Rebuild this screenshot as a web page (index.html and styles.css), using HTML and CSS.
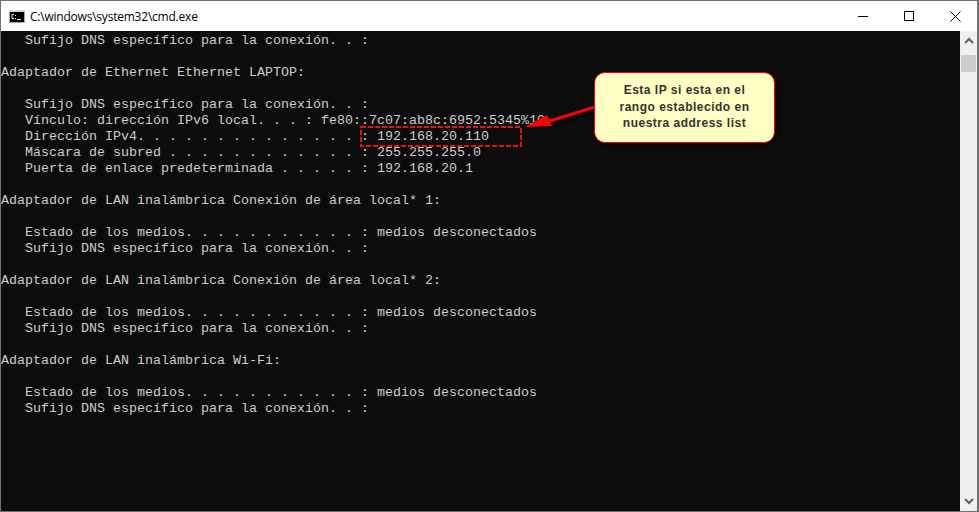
FILE: index.html
```html
<!DOCTYPE html>
<html lang="es">
<head>
<meta charset="utf-8">
<title>cmd.exe</title>
<link rel="stylesheet" href="styles.css">
</head>
<body>
<div class="window">
  <header class="titlebar">
    <svg class="app-icon" width="16" height="13" viewBox="0 0 16 13" aria-hidden="true">
      <rect x="0" y="0" width="16" height="13" fill="#a8a8a8"/>
      <rect x="0" y="0" width="16" height="2" fill="#d8d8d8"/>
      <rect x="1" y="2" width="14" height="10" fill="#000"/>
      <path d="M5 4.500H3v4h2M6.500 5v1M6.500 8v1M8 9.500h4" fill="none" stroke="#e8e8e8" stroke-width="1"/>
    </svg>
    <span class="title">C:\windows\system32\cmd.exe</span>
    <div class="controls">
      <span class="ctl"><svg width="10" height="10" viewBox="0 0 10 10"><path d="M0 5.500H10" stroke="#000" fill="none"/></svg></span>
      <span class="ctl"><svg width="10" height="10" viewBox="0 0 10 10"><rect x=".5" y=".5" width="9" height="9" stroke="#000" fill="none"/></svg></span>
      <span class="ctl"><svg width="11" height="11" viewBox="0 0 11 11"><path d="M.5 .5L10.500 10.500M10.500 .5L.5 10.500" stroke="#000" fill="none" stroke-width="1"/></svg></span>
    </div>
  </header>
  <div class="body">
<pre class="console">   Sufijo DNS específico para la conexión. . :

Adaptador de Ethernet Ethernet LAPTOP:

   Sufijo DNS específico para la conexión. . :
   Vínculo: dirección IPv6 local. . . : fe80::7c07:ab8c:6952:5345%10
   Dirección IPv4. . . . . . . . . . . . . . : 192.168.20.110
   Máscara de subred . . . . . . . . . . . . : 255.255.255.0
   Puerta de enlace predeterminada . . . . . : 192.168.20.1

Adaptador de LAN inalámbrica Conexión de área local* 1:

   Estado de los medios. . . . . . . . . . . : medios desconectados
   Sufijo DNS específico para la conexión. . :

Adaptador de LAN inalámbrica Conexión de área local* 2:

   Estado de los medios. . . . . . . . . . . : medios desconectados
   Sufijo DNS específico para la conexión. . :

Adaptador de LAN inalámbrica Wi-Fi:

   Estado de los medios. . . . . . . . . . . : medios desconectados
   Sufijo DNS específico para la conexión. . :</pre>
    <div class="scrollbar">
      <svg class="arrow" width="10" height="7" viewBox="0 0 10 7"><path d="M1 6L5 2L9 6" fill="none" stroke="#606060" stroke-width="2"/></svg>
      <div class="thumb"></div>
      <svg class="arrow arrow-down" width="10" height="7" viewBox="0 0 10 7"><path d="M1 1L5 5L9 1" fill="none" stroke="#606060" stroke-width="2"/></svg>
    </div>
  </div>
  <svg class="dashed-box" width="162" height="21" viewBox="0 0 162 21" aria-hidden="true">
    <rect x="1" y="1" width="160" height="19" fill="none" stroke="#e81010" stroke-width="2" stroke-dasharray="5 2"/>
  </svg>
  <svg class="pointer" width="80" height="40" viewBox="0 0 80 40" aria-hidden="true">
    <path d="M75 12L24 28" stroke="#000" stroke-opacity=".35" stroke-width="3" fill="none" transform="translate(1 2)"/>
    <path d="M75 9L20 26" stroke="#f00" stroke-width="3" fill="none"/>
    <path d="M5 29L27 17L32 28Z" fill="#f00"/>
  </svg>
  <div class="callout">Esta IP si esta en el<br>rango establecido en<br>nuestra address list</div>
</div>
</body>
</html>
```
FILE: styles.css
```css
* { box-sizing: border-box; }
html, body { margin: 0; padding: 0; }
body { width: 979px; height: 512px; overflow: hidden; background: #fff; }
.window {
  position: relative;
  width: 979px;
  height: 512px;
  border: 1px solid #707070;
  border-right-width: 2px;
  display: flex;
  flex-direction: column;
  background: #fff;
}
.titlebar {
  height: 30px;
  flex: none;
  display: flex;
  align-items: center;
  padding-left: 8px;
  background: #fff;
}
.app-icon { flex: none; }
.title {
  margin-left: 5px;
  font: 12px "Open Sans", "Liberation Sans", sans-serif;
  letter-spacing: -0.22px;
  color: #000;
}
.controls { margin-left: auto; margin-right: -1px; display: flex; }
.ctl {
  width: 46px;
  height: 29px;
  display: flex;
  align-items: center;
  justify-content: center;
}
.body { flex: 1; display: flex; min-height: 0; }
.console {
  flex: 1;
  margin: 0;
  padding: 2px 0 0 0;
  background: #0c0c0c;
  color: #cccccc;
  font: 13.33px/16px "Liberation Mono", "DejaVu Sans Mono", monospace;
  width: 960px;
  overflow: hidden;
}
.scrollbar {
  width: 17px;
  flex: none;
  background: #f0f0f0;
  display: flex;
  flex-direction: column;
  align-items: center;
  padding-top: 6px;
}
.thumb { width: 15px; height: 17px; background: #cdcdcd; margin-top: 11px; }
.arrow { flex: none; }
.arrow-down { margin-top: auto; margin-bottom: 6px; }
.dashed-box { position: absolute; left: 359px; top: 125px; }
.pointer { position: absolute; left: 519px; top: 97px; }
.callout {
  position: absolute;
  left: 593px;
  top: 71px;
  width: 181px;
  height: 71px;
  padding-bottom: 1px;
  border: 1px solid #f00;
  border-radius: 11px;
  background: #ffffc4;
  box-shadow: 2px 2px 4px rgba(0, 0, 0, .5);
  display: flex;
  align-items: center;
  justify-content: center;
  text-align: center;
  font: bold 12px/16.500px "Liberation Sans", Arial, sans-serif;
  letter-spacing: .5px;
  color: #333;
}
```
